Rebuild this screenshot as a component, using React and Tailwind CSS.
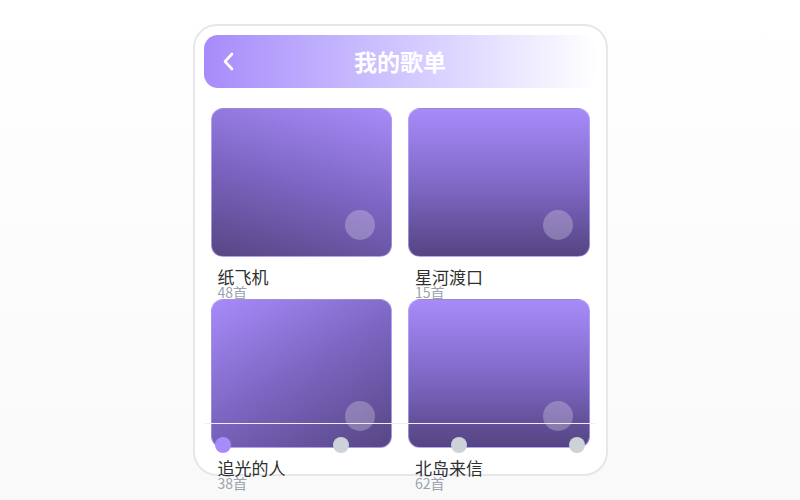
import React from "react";

const playlists = [
  { name: "纸飞机", count: 48, bg: "bg-[linear-gradient(195deg,#a88bf8_0%,#7d66c4_50%,#574684_100%)]" },
  { name: "星河渡口", count: 15, bg: "bg-[linear-gradient(180deg,#a78bfa_0%,#7c66c2_55%,#554482_100%)]" },
  { name: "追光的人", count: 38, bg: "bg-[linear-gradient(150deg,#a78bfa_0%,#7b65c0_50%,#574684_100%)]" },
  { name: "北岛来信", count: 62, bg: "bg-[linear-gradient(180deg,#a78bfa_0%,#7c66c2_55%,#554482_100%)]" },
];

const PlaylistCard = ({ item }) => {
  return (
    <div className="h-[191px]">
      <div
        className={`relative h-[149px] rounded-[12px] border border-[#c4b5fd]/60 ${item.bg}`}
      >
        <div className="absolute right-4 bottom-4 w-[30px] h-[30px] rounded-full bg-white/25" />
      </div>
      <div className="pl-[7px] mt-[10px]">
        <div className="text-[17px] leading-[19px] text-[#2f2f2f]">
          {item.name}
        </div>
        <div className="text-[14px] leading-[13px] text-[#9ca3af]">
          {item.count}首
        </div>
      </div>
    </div>
  );
};

const App = () => {
  return (
    <div
      className="min-h-[500px] bg-linear-to-b from-white to-[#f9f9f9] flex justify-center pt-6"
      style={{ fontFamily: '"Noto Sans CJK SC", "Noto Sans", sans-serif' }}
    >
      <div className="relative w-[415px] h-[452px] rounded-[24px] border-2 border-[#e5e7eb] bg-white">
        <div className="px-[9px] pt-[9px]">
          <div className="relative h-[53px] rounded-[14px] bg-linear-to-r from-[#a78bfa] to-white flex items-center justify-center">
            <svg
              className="absolute left-[18px] top-[17px]"
              width="13"
              height="19"
              viewBox="0 0 13 19"
              fill="none"
              stroke="white"
              strokeWidth="2.6"
              strokeLinecap="round"
              strokeLinejoin="round"
            >
              <polyline points="10,2 3,9.5 10,17" />
            </svg>
            <div className="text-[23px] font-bold text-white leading-none">
              我的歌单
            </div>
          </div>
        </div>

        <div className="grid grid-cols-2 gap-x-4 px-4 pt-5">
          {playlists.map((item, i) => (
            <PlaylistCard key={i} item={item} />
          ))}
        </div>

        {/* slider overlay */}
        <div className="absolute left-[10px] right-[11px] top-[397px]">
          <div className="h-px bg-[#eceef2]" />
          <div className="flex justify-between px-[10px] mt-[13px]">
            <div className="w-4 h-4 rounded-full bg-[#a78bfa]" />
            <div className="w-4 h-4 rounded-full bg-[#cdd1d8]" />
            <div className="w-4 h-4 rounded-full bg-[#cdd1d8]" />
            <div className="w-4 h-4 rounded-full bg-[#cdd1d8]" />
          </div>
        </div>
      </div>
    </div>
  );
};

export default App;
